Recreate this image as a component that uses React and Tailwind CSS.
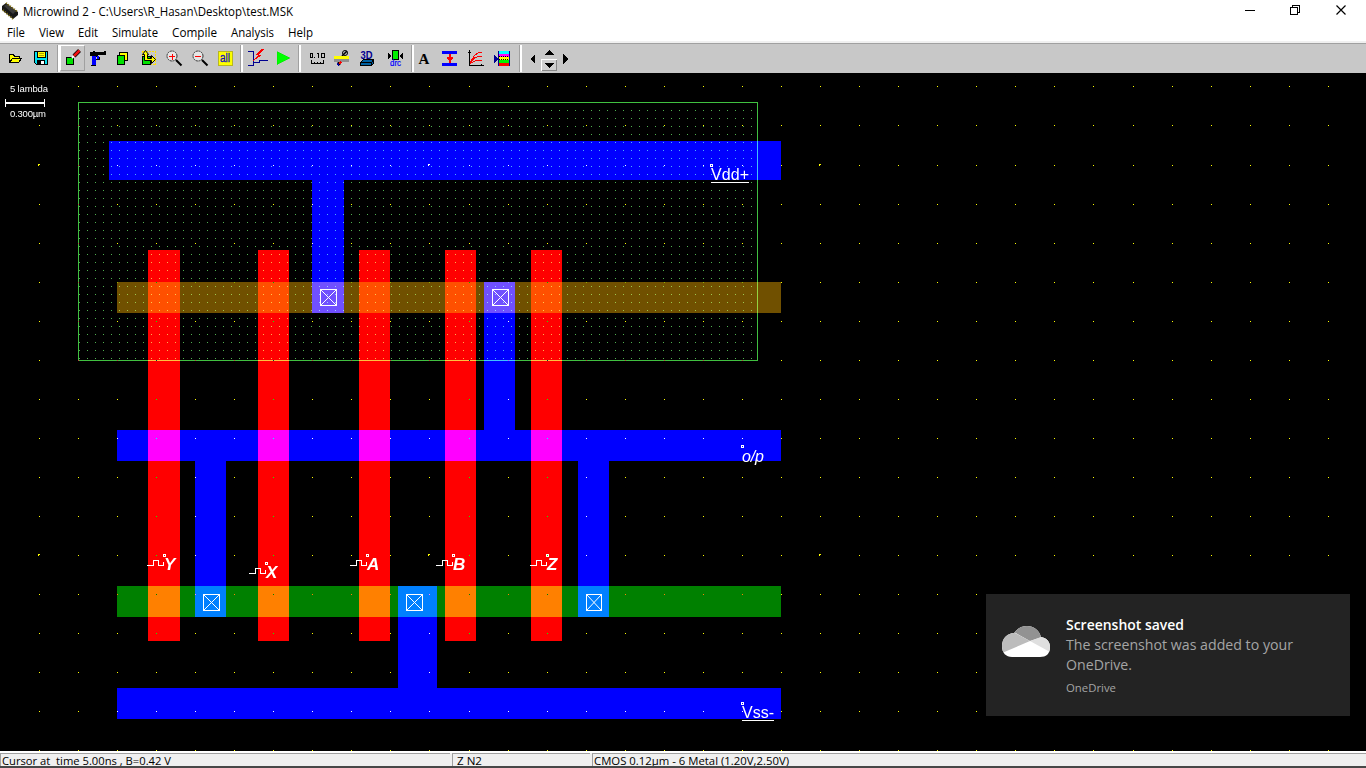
const XS = Array.from({ length: 34 }, (_, i) => Math.round(39.06 * (i + 1) - 0.2));
const YS = Array.from({ length: 18 }, (_, i) => Math.floor(8.78 + 39.06 * (i + 2)));

const BLUE = [
  [109, 141, 672, 39],
  [312, 180, 32, 133],
  [484, 282, 31, 148],
  [117, 430, 664, 31],
  [195, 461, 31, 156],
  [578, 461, 31, 156],
  [398, 586, 39, 102],
  [117, 688, 664, 31],
];
const RED = [
  [148, 250, 32, 391],
  [258, 250, 31, 391],
  [359, 250, 31, 391],
  [445, 250, 31, 391],
  [531, 250, 31, 391],
];
const PINS = [
  [148, 555, 'Y', 164, 555],
  [250, 563, 'X', 266, 563],
  [351, 555, 'A', 367, 555],
  [437, 555, 'B', 453, 555],
  [531, 555, 'Z', 547, 555],
];
const CONTACTS = [[320, 289], [492, 289], [203, 594], [406, 594], [586, 594]];

function Dots() {
  return (
    <g fill="#ffff00" className="mix-blend-difference">
      {YS.map((y) =>
        XS.map((x) =>
          [39, 429, 820, 1210].includes(x) && [165, 555].includes(y) ? (
            <path key={x + '-' + y} d={`M${x - 1} ${y - 1}h2v1h-1v1h-1z`} />
          ) : x === 39 && y < 125 ? null : (
            <rect key={x + '-' + y} x={x} y={y} width="1" height="1" />
          )
        )
      )}
    </g>
  );
}

function Layout() {
  const wellDots = [];
  for (let y = 110; y < 360; y += 8) for (let x = 79; x < 757; x += 8) wellDots.push(`M${x} ${y}h1v1h-1z`);
  return (
    <svg className="block h-[678px] w-[1366px] bg-black isolate" viewBox="0 73 1366 678" shapeRendering="crispEdges">
      <rect x="0" y="73" width="1366" height="678" fill="#000" />
      <g fill="#0000ff">
        {BLUE.map(([x, y, w, h]) => <rect key={x + '-' + y} x={x} y={y} width={w} height={h} />)}
      </g>
      <g fill="#ff0000" className="mix-blend-screen">
        {RED.map(([x, y, w, h]) => <rect key={x} x={x} y={y} width={w} height={h} />)}
      </g>
      <rect className="mix-blend-screen" x="117" y="282" width="664" height="31" fill="#705000" />
      <rect className="mix-blend-screen" x="117" y="586" width="664" height="31" fill="#008000" />
      <path className="mix-blend-screen" d={wellDots.join('')} fill="#50b050" />
      <rect className="mix-blend-screen" x="78.5" y="102.5" width="679" height="258" fill="none" stroke="#40c040" />
      <Dots />
      <g fill="none" stroke="#fff">
        {CONTACTS.map(([x, y]) => {
          const w = x === 586 ? 15 : 16;
          return (
            <g key={x}>
              <rect x={x + 0.5} y={y + 0.5} width={w} height="16" />
              <path d={`M${x + 1} ${y + 1}l${w - 1} 15M${x + w} ${y + 1}l${1 - w} 15`} shapeRendering="auto" />
            </g>
          );
        })}
        {PINS.map(([x, y, n, cx, cy]) => (
          <g key={n}>
            <path d={`M${x - 1} ${y + 10.5}h6v-5h5v5h5v-4`} />
            <rect x={cx - 0.5} y={cy - 0.5} width="2" height="2" />
          </g>
        ))}
        <rect x="710.5" y="164.5" width="2" height="2" />
        <rect x="741.5" y="445.5" width="2" height="2" />
        <rect x="741.5" y="702.5" width="2" height="2" />
        <path d="M711 182.5h38M742 720.5h32M5 103.5h40M5.500 99v8M44.500 99v8" />
        <path d="M5 102.500h40" />
      </g>
      <g fill="#fff" fontFamily="'Liberation Sans', Arial, sans-serif">
        {PINS.map(([x, y, n]) => (
          <text key={n} x={x + 16} y={y + 15} fontSize="17" fontWeight="bold" fontStyle="italic">{n}</text>
        ))}
        <text x="711" y="180" fontSize="16" textLength="38">Vdd+</text>
        <text x="742" y="462" fontSize="16" fontStyle="italic" textLength="22">o/p</text>
        <text x="742" y="718" fontSize="16" textLength="32">Vss-</text>
        <text x="10" y="92" fontSize="9.500" textLength="38">5 lambda</text>
        <text x="10" y="117" fontSize="9.500" textLength="36">0.300µm</text>
      </g>
    </svg>
  );
}

const Icon = ({ w = 18, children, className = '' }) => (
  <svg className={`block h-[18px] shrink-0 ${className}`} width={w} height="18" viewBox={`0 0 ${w} 18`} shapeRendering="crispEdges" fill="none" stroke="#000">
    {children}
  </svg>
);

const Tool = ({ children, className = '' }) => (
  <div className={`flex h-[26px] w-[25px] shrink-0 items-center justify-center ${className}`}>{children}</div>
);

const Sep = () => <div className="h-[27px] w-[3px] shrink-0 border-l border-[#a0a0a0] border-r-2 border-r-white" />;

const Magnifier = ({ plus }) => (
  <Icon>
    <circle cx="7" cy="7" r="5" fill="#e6e6e6" stroke="#333" strokeDasharray="2 .6" shapeRendering="auto" />
    <path d="M11 11l5.500 5.500" strokeWidth="2" shapeRendering="auto" />
    <path d="M4 7.500h6" stroke="#f00" />
    {plus && <path d="M7.500 5v6" stroke="#f00" />}
  </Icon>
);

function Toolbar() {
  return (
    <div className="flex h-[30px] items-center border-t border-[#a0a0a0] bg-[#c8c8c8]">
      <div className="-mt-[2px] flex w-[57px] pl-[2px]">
        <Tool>
          <Icon className="mt-[2px]">
            <path d="M3.500 12.500v-8h4l1 2h5v2M3.500 12.500l3-4h9l-3 4z" fill="#ffff00" />
          </Icon>
        </Tool>
        <Tool className="ml-px">
          <Icon>
            <path d="M2.500 2.500h13v13h-11l-2-2z" fill="#00e0f0" />
            <path d="M5.500 2.500h8v6h-8z" fill="#ffff00" />
            <path d="M7 4.500h5M7 6.500h5" stroke="#b0a000" />
            <path d="M5.500 11.500h7v4h-7z" fill="#fff" />
            <path d="M6 12h3v3h-3z" fill="#000" stroke="none" />
          </Icon>
        </Tool>
      </div>
      <Sep />
      <div className="-mt-[2px] flex w-[180px]">
        <Tool className="border border-white border-r-[#a0a0a0] border-b-[#a0a0a0]">
          <Icon className="mr-[2px]">
            <path d="M3.500 8.500h7v7h-7z" fill="#00e000" />
            <path d="M9 9l3-3" stroke="#fff" strokeWidth="2" shapeRendering="auto" />
            <path d="M11 7l5.500-5.500" strokeWidth="4" shapeRendering="auto" />
            <path d="M11 7l5.500-5.500" stroke="#f01010" strokeWidth="2.500" shapeRendering="auto" />
          </Icon>
        </Tool>
        <Tool>
          <Icon>
            <path d="M1 3h3v-1h2v1h9v-1h2v4h-8v2h-4v-1H1z" fill="#000" stroke="none" />
            <path d="M3 7h4v9H3zM8 7h2v3H8z" fill="#0000ff" stroke="none" />
            <path d="M2 16.500h5M7 10.500h3v-3" />
          </Icon>
        </Tool>
        <Tool className="-ml-px">
          <Icon>
            <path d="M6.500 3.500h8v8h-8z" fill="#ffff00" />
            <path d="M4.500 6.500h7v9h-7z" fill="#00e000" />
          </Icon>
        </Tool>
        <Tool className="ml-px">
          <Icon>
            <path d="M3.500 2.500h13v13h-13z" stroke="#ffe000" strokeDasharray="2 1" />
            <path d="M3.500 7.500h8v8h-8z" fill="#00e000" />
            <path d="M3.500 5.500l3-4 3 4h-1v4h4v-3l4 4-4 4v-3h-7v-6z" fill="#ffff00" shapeRendering="auto" />
          </Icon>
        </Tool>
        <Tool className="ml-px"><Magnifier plus /></Tool>
        <Tool className="ml-px"><Magnifier /></Tool>
        <Tool>
          <Icon>
            <path d="M2 2h14v14H2z" fill="#ffff00" stroke="#b8b820" />
            <text x="4" y="13" fontFamily="'Liberation Sans', sans-serif" fontSize="12" fill="#1010c0" stroke="#1010c0" strokeWidth=".3" textLength="10" lengthAdjust="spacingAndGlyphs">all</text>
          </Icon>
        </Tool>
      </div>
      <Sep />
      <div className="-mt-[2px] flex w-[55px] pl-[2px]">
        <Tool>
          <Icon w={22}>
            <path d="M1 2.500h5.500v14H1M6 13.500h6.500v-2h8" stroke="#000090" />
            <path d="M17 0h-3l-6 6h3l-5 6 9-6h-3z" fill="#f00" stroke="none" />
          </Icon>
        </Tool>
        <Tool>
          <Icon><path d="M3 2.500v13l13-6.500z" fill="#00ff00" stroke="#00e800" strokeWidth=".5" /></Icon>
        </Tool>
      </div>
      <Sep />
      <div className="-mt-[2px] flex w-[110px] pl-[4px]">
        <Tool>
          <Icon w={18}>
            <path d="M1.500 4.500h2v4h-2zM8 4.500h1.500v4M12.500 4.500h3v4h-3zM5 8.500h1" />
            <path d="M2.500 11v3.500h12V11M5.500 13v1M8.500 13v1M11.500 13v1" />
          </Icon>
        </Tool>
        <Tool className="-ml-[2px]">
          <Icon>
            <circle cx="13" cy="4" r="2.500" shapeRendering="auto" />
            <path d="M10 7l5-5M6 13l2 3" strokeWidth="1.500" shapeRendering="auto" />
            <path d="M2 7h15v3H2z" fill="#ffff00" stroke="none" />
            <path d="M2 10h15v3H2z" fill="#909090" stroke="none" />
            <path d="M9 13l-2 2" stroke="#f00" strokeWidth="1.500" />
            <path d="M5 14l2 3" stroke="#0000b0" />
          </Icon>
        </Tool>
        <Tool className="ml-px">
          <Icon>
            <path d="M2.500 13.500l3-3h10l-2 3zM2.500 13.500v3h11v-3M13.500 16.500l2-2v-4" fill="#0060a0" />
            <text x="2.500" y="10" fontFamily="'Liberation Sans', sans-serif" fontSize="11.500" fontWeight="bold" fill="#000090" stroke="none" textLength="12" lengthAdjust="spacingAndGlyphs">3D</text>
          </Icon>
        </Tool>
        <Tool className="ml-[3px]">
          <Icon>
            <path d="M6.500 1.500h6v9h-6z" fill="#00f000" />
            <path d="M2 4l4 3-4 3zM17 4l-4 3 4 3z" fill="#000" stroke="none" />
            <text x="4" y="17" fontFamily="'Liberation Sans', sans-serif" fontSize="9" fill="#0000ff" stroke="#0000ff" strokeWidth=".2" textLength="11" lengthAdjust="spacingAndGlyphs">drc</text>
          </Icon>
        </Tool>
      </div>
      <Sep />
      <div className="-mt-[2px] flex w-[105px]">
        <Tool className="-ml-[3px]">
          <Icon><text x="3.500" y="14.500" fontFamily="'Liberation Serif', serif" fontSize="15" fontWeight="bold" fill="#000" stroke="none">A</text></Icon>
        </Tool>
        <Tool>
          <Icon>
            <path d="M2 2h15v3H2zM2 14h15v3H2z" fill="#0000ff" stroke="none" />
            <path d="M10 5v9" stroke="#f00" strokeWidth="2" />
            <path d="M7 8.500h6M7 9.500h6M8 10.500h4" stroke="#f00" />
          </Icon>
        </Tool>
        <Tool className="ml-px">
          <Icon>
            <path d="M3.500 1v15h14M2 3.500h3M15.500 15v2" />
            <path d="M4 15c2-6 6-12 12-12M4 15c2-5 6-8 12-8M4 15c3-3 6-4 12-4" stroke="#f00" />
          </Icon>
        </Tool>
        <Tool className="ml-[2px]">
          <Icon>
            <path d="M1 6v8l4-4z" fill="#000090" stroke="none" />
            <path d="M5 2h11v3H5z" fill="#00ffff" stroke="none" />
            <path d="M5 5h11v3H5z" fill="#ff00ff" stroke="none" />
            <path d="M5 8h11v3H5z" fill="#ffff00" stroke="none" />
            <path d="M5 11h11v3H5z" fill="#00f000" stroke="none" />
            <path d="M5 14h11v3H5z" fill="#f00" stroke="none" />
            <path d="M5.500 2v15M16.500 2v15" stroke="#000090" />
            <path d="M6 7.500h10M6 10.500h10" strokeDasharray="1 1" />
          </Icon>
        </Tool>
      </div>
      <Sep />
      <svg className="-mt-[2px] ml-[6px] block h-[26px] w-[44px]" viewBox="528 46 44 26" shapeRendering="crispEdges">
        <path d="M535 55v10l-5-5zM563 55v10l5-5zM544 56l5.500-5 5.500 5z" />
        <path d="M541 61h16v10h-16z" fill="#d0d0d0" />
        <path d="M541.500 71.500v-11h15" fill="none" stroke="#fff" />
        <path d="M541.500 71.500h15v-11" fill="none" stroke="#888" />
        <path d="M544 64h11l-5.500 5z" />
      </svg>
    </div>
  );
}

const MENU = [
  ['File', 'w-[32px]', 18], ['View', 'w-[39px]', 25], ['Edit', 'w-[34px]', 20], ['Simulate', 'w-[60px]', 46],
  ['Compile', 'w-[59px]', 45], ['Analysis', 'w-[57px]', 43], ['Help', 'w-[40px]', 25],
];

const Fit = ({ width, size, children, weight, color = '#000', h = 20, y = 15, className = '' }) => (
  <svg className={`block shrink-0 overflow-visible ${className}`} width={width} height={h}>
    <text x="0" y={y} fontFamily="'Open Sans', sans-serif" fontSize={size} fontWeight={weight} fill={color} textLength={width} lengthAdjust="spacingAndGlyphs" xmlSpace="preserve">{children}</text>
  </svg>
);

function Header() {
  return (
    <>
      <div className="flex h-[22px] items-start bg-white">
        <svg className="ml-[2px] mt-[2px] block h-[18px] w-[17px]" viewBox="0 0 17 18">
          <path d="M0 4l4-3 12 9v3l-5 4L0 8z" fill="#181818" />
          <path d="M2 4l3-2 9 7-3 3z" fill="#3a3a3a" />
          <path d="M4 1l12 9M1 8l10 9" stroke="#807010" strokeWidth="2" strokeDasharray="1 1.500" />
        </svg>
        <Fit className="ml-[4px]" width={270} size={12} y={16}>{'Microwind 2 - C:\\Users\\R_Hasan\\Desktop\\test.MSK'}</Fit>
        <svg className="ml-auto mr-[16px] mt-[4px] block h-[13px] w-[105px]" viewBox="1245 4 105 13" fill="none" stroke="#000">
          <path d="M1245 10.500h10M1290.500 7.500h7v7h-7zM1292.500 7.500v-2h7v7h-2" shapeRendering="crispEdges" />
          <path d="M1336.500 5.500l9 9M1345.500 5.500l-9 9" strokeWidth="1.200" />
        </svg>
      </div>
      <div className="flex h-[19px] bg-white pl-[7px]">
        {MENU.map(([label, cls, width]) => (
          <div key={label} className={cls}><Fit width={width} size={12}>{label}</Fit></div>
        ))}
      </div>
      <div className="h-[2px] bg-[#f0f0f0]" />
    </>
  );
}

function Toast() {
  return (
    <div className="absolute left-[986px] top-[594px] flex h-[122px] w-[364px] bg-[#232323] pl-[16px]">
      <svg className="mt-[32px] block h-[32px] w-[48px]" viewBox="0 0 48 32">
        <defs>
          <clipPath id="cloud"><path d="M10 31C4 31 0 27 0 20C0 12 6 7 12 7C16 2 20 0 25 0C32 0 37 4 39 11C45 12 48 16 48 21C48 28 44 31 38 31z" /></clipPath>
        </defs>
        <g clipPath="url(#cloud)">
          <path d="M0 0h48v32H0z" fill="#fff" />
          <path d="M10 5L28 15L40 11L40 0H10z" fill="#929292" />
          <path d="M0 0v27L28 15L13 7z" fill="#bcbcbc" />
          <path d="M28 15L39 11L50 12V27z" fill="#dfdfdf" />
        </g>
      </svg>
      <div className="ml-[16px] flex flex-col pt-[20px]">
        <Fit width={118} size={14} weight={600} color="#fff" y={16}>Screenshot saved</Fit>
        <Fit width={227} size={14} color="#a5a5a5" y={16}>The screenshot was added to your</Fit>
        <Fit width={66} size={14} color="#a5a5a5" y={16}>OneDrive.</Fit>
        <Fit className="mt-[3px]" width={50} size={11.5} color="#a5a5a5">OneDrive</Fit>
      </div>
    </div>
  );
}

function StatusBar() {
  return (
    <div className="flex h-[17px] flex-col border-t-2 border-white bg-[#f0f0f0]">
      <div className="flex h-[13px]">
        <div className="w-[450px] border-l border-t border-[#a0a0a0] pl-[1px]"><Fit width={169} size={11.5} h={12} y={11}>{'Cursor at\u00a0 time 5.00ns , B=0.42 V'}</Fit></div>
        <div className="ml-[2px] w-[138px] border-l border-t border-[#a0a0a0] pl-[4px]"><Fit width={25} size={11.5} h={12} y={11}>Z N2</Fit></div>
        <div className="ml-[2px] flex-1 border-l border-t border-[#a0a0a0] pl-[1px]"><Fit width={195} size={11.5} h={12} y={11}>CMOS 0.12µm - 6 Metal (1.20V,2.50V)</Fit></div>
      </div>
      <div className="h-[2px] bg-[#484848]" />
    </div>
  );
}

export default function App() {
  return (
    <div className="relative flex h-[768px] w-[1366px] flex-col overflow-hidden bg-white">
      <Header />
      <Toolbar />
      <Layout />
      <StatusBar />
      <Toast />
    </div>
  );
}
